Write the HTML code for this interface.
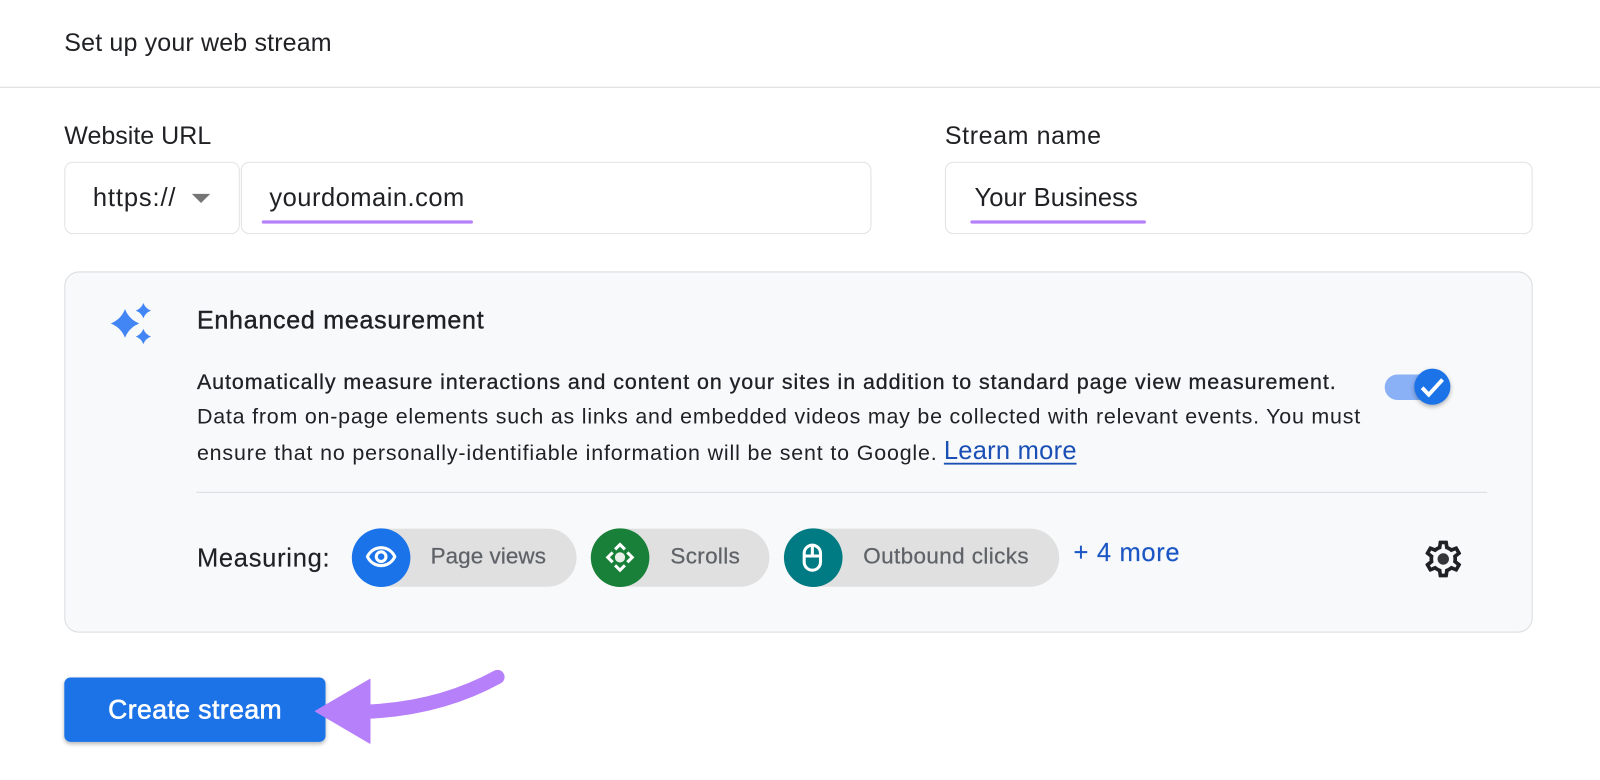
<!DOCTYPE html>
<html lang="en">
<head>
<meta charset="utf-8">
<title>Set up your web stream</title>
<style>
html,body{margin:0;padding:0;background:#fff;width:1600px;height:780px;overflow:hidden}
svg{display:block}
text{font-family:"Liberation Sans",Arial,sans-serif;white-space:pre}
</style>
</head>
<body>
<svg xmlns="http://www.w3.org/2000/svg" width="1600" height="780" viewBox="0 0 1568 764.4">
<defs>
<filter id="s1" x="-20%" y="-20%" width="140%" height="150%"><feDropShadow dx="0" dy="2" stdDeviation="2" flood-color="#000" flood-opacity=".3"/></filter>
</defs>
<rect width="1568" height="765" fill="#fff"/>
<text x="63" y="50" font-size="24.500" fill="#202124" textLength="262" lengthAdjust="spacing">Set up your web stream</text>
<rect x="0" y="85" width="1568" height="1" fill="#dadce0"/>

<text x="63" y="141" font-size="24.500" fill="#202124" textLength="144" lengthAdjust="spacing">Website URL</text>
<text x="926" y="141" font-size="24.500" fill="#202124" textLength="153" lengthAdjust="spacing">Stream name</text>

<rect x="63.5" y="159" width="171" height="70" rx="8" fill="#fff" stroke="#e0e2e5"/>
<rect x="236.5" y="159" width="617" height="70" rx="8" fill="#fff" stroke="#e0e2e5"/>
<rect x="926.5" y="159" width="575" height="70" rx="8" fill="#fff" stroke="#e0e2e5"/>
<text x="91" y="202" font-size="25" fill="#202124" textLength="81" lengthAdjust="spacing">https://</text>
<path d="M188 190h18l-9 9z" fill="#757575"/>
<text x="264" y="202" font-size="25" fill="#202124" textLength="191" lengthAdjust="spacing">yourdomain.com</text>
<text x="955" y="202" font-size="25" fill="#202124" textLength="160" lengthAdjust="spacing">Your Business</text>
<rect x="256.5" y="216" width="207" height="3.2" rx="1.6" fill="#b780fb"/>
<rect x="951" y="216" width="172" height="3.2" rx="1.6" fill="#b780fb"/>

<rect x="63.5" y="266.5" width="1438" height="353" rx="14" fill="#f8f9fa" stroke="#dadce0"/>

<path d="M122.5 303Q126.4 313 136.4 317Q126.4 321 122.5 331Q118.600 321 108.600 317Q118.600 313 122.5 303z" fill="#4285f4"/>
<path d="M140.500 296.900Q142.500 302.400 148 304.400Q142.500 306.400 140.500 311.900Q138.500 306.400 133 304.400Q138.500 302.400 140.500 296.900z" fill="#4285f4"/>
<path d="M140.500 322.300Q142.500 327.800 148 329.800Q142.500 331.800 140.500 337.300Q138.500 331.800 133 329.800Q138.500 327.800 140.500 322.300z" fill="#4285f4"/>

<text x="193" y="322" font-size="24.500" fill="#202124" stroke="#202124" stroke-width=".4" textLength="281" lengthAdjust="spacing">Enhanced measurement</text>
<text x="193" y="381" font-size="21" fill="#202124" stroke="#202124" stroke-width=".3" textLength="1116" lengthAdjust="spacing">Automatically measure interactions and content on your sites in addition to standard page view measurement.</text>
<text x="193" y="415" font-size="21" fill="#202124" textLength="1140" lengthAdjust="spacing">Data from on-page elements such as links and embedded videos may be collected with relevant events. You must</text>
<text x="193" y="451" font-size="21" fill="#202124" textLength="725" lengthAdjust="spacing">ensure that no personally-identifiable information will be sent to Google.</text>
<text x="925" y="450" font-size="25" fill="#1a4fb5" textLength="130" lengthAdjust="spacing">Learn more</text>
<rect x="925" y="453.500" width="130" height="1.800" fill="#1a4fb5"/>

<rect x="1357" y="367" width="48" height="25" rx="12.500" fill="#8ab0f5"/>
<circle cx="1403.700" cy="379" r="17.700" fill="#1a73e8" filter="url(#s1)"/>
<path d="M1393.700 380l6.500 6.800 13.500-14.800" fill="none" stroke="#fff" stroke-width="3.800"/>

<rect x="192.500" y="482" width="1265" height="1" fill="#dadce0"/>

<text x="193" y="555" font-size="25" fill="#202124" stroke="#202124" stroke-width=".15" textLength="130" lengthAdjust="spacing">Measuring:</text>

<rect x="345" y="518" width="220" height="57" rx="28.500" fill="#e0e0e0"/>
<circle cx="373.500" cy="546.500" r="28.700" fill="#1a73e8"/>
<path transform="translate(357.300 530) scale(1.350)" fill="#fff" stroke="#fff" stroke-width=".3" d="M12 6c3.790 0 7.170 2.130 8.820 5.500C19.170 14.870 15.790 17 12 17s-7.170-2.130-8.820-5.500C4.830 8.130 8.210 6 12 6m0-2C7 4 2.730 7.110 1 11.500 2.730 15.890 7 19 12 19s9.270-3.110 11-7.500C21.270 7.110 17 4 12 4zm0 5c1.380 0 2.500 1.120 2.500 2.500S13.380 14 12 14s-2.500-1.120-2.500-2.500S10.620 9 12 9m0-2c-2.480 0-4.500 2.020-4.500 4.500S9.520 16 12 16s4.500-2.020 4.500-4.500S14.480 7 12 7z"/>
<text x="422" y="552" font-size="22" fill="#5f6368" stroke="#5f6368" stroke-width=".25" textLength="113" lengthAdjust="spacing">Page views</text>

<rect x="579" y="518" width="175" height="57" rx="28.500" fill="#e0e0e0"/>
<circle cx="607.700" cy="546.500" r="28.700" fill="#188038"/>
<g fill="none" stroke="#fff" stroke-width="3">
<path d="M602.800 538.400l4.800-4.800 4.800 4.800"/>
<path d="M602.800 554l4.800 4.800 4.800-4.800"/>
<path d="M600.400 541.400l-4.800 4.800 4.800 4.800"/>
<path d="M614.800 541.400l4.800 4.800-4.800 4.800"/>
</g>
<circle cx="607.600" cy="546.200" r="5" fill="#e8f0e8"/>
<text x="657" y="552" font-size="22" fill="#5f6368" stroke="#5f6368" stroke-width=".25" textLength="68" lengthAdjust="spacing">Scrolls</text>

<rect x="768" y="518" width="270" height="57" rx="28.500" fill="#e0e0e0"/>
<circle cx="797" cy="546.500" r="28.700" fill="#007b83"/>
<rect x="788.100" y="534.300" width="16" height="24.500" rx="8" fill="none" stroke="#fff" stroke-width="3"/>
<path d="M796.100 534.300v10.600M788.100 544.900h16" fill="none" stroke="#fff" stroke-width="3"/>
<text x="846" y="552" font-size="22" fill="#5f6368" stroke="#5f6368" stroke-width=".25" textLength="162" lengthAdjust="spacing">Outbound clicks</text>

<text x="1052" y="550" font-size="25" fill="#1a56c4" stroke="#1a56c4" stroke-width=".15" textLength="104" lengthAdjust="spacing">+ 4 more</text>

<path transform="translate(1392.800 526.200) scale(1.800)" fill="#202124" d="M19.430 12.980c.04-.32.07-.64.07-.98 0-.34-.03-.66-.07-.98l2.110-1.650c.19-.15.24-.42.12-.64l-2-3.460c-.09-.16-.26-.25-.44-.25-.06 0-.12.01-.17.03l-2.490 1c-.52-.4-1.080-.73-1.690-.98l-.38-2.650C14.460 2.180 14.250 2 14 2h-4c-.25 0-.46.18-.49.42l-.38 2.650c-.61.25-1.170.59-1.690.98l-2.490-1c-.06-.02-.12-.03-.18-.03-.17 0-.34.09-.43.25l-2 3.460c-.13.22-.07.49.12.64l2.110 1.650c-.04.32-.07.65-.07.98 0 .33.03.66.07.98l-2.110 1.650c-.19.15-.24.42-.12.64l2 3.460c.09.16.26.25.44.25.06 0 .12-.01.17-.03l2.490-1c.52.4 1.080.73 1.690.98l.38 2.650c.03.24.24.42.49.42h4c.25 0 .46-.18.49-.42l.38-2.650c.61-.25 1.170-.59 1.690-.98l2.490 1c.06.02.12.03.18.03.17 0 .34-.09.43-.25l2-3.460c.12-.22.07-.49-.12-.64l-2.110-1.650zm-1.980-1.710c.04.31.05.52.05.73 0 .21-.02.43-.05.73l-.14 1.130.89.7 1.080.84-.7 1.210-1.270-.51-1.040-.42-.9.68c-.43.32-.84.56-1.250.73l-1.060.43-.16 1.130-.2 1.350h-1.400l-.19-1.350-.16-1.130-1.060-.43c-.43-.18-.83-.41-1.230-.71l-.91-.7-1.060.43-1.270.51-.7-1.210 1.080-.84.89-.7-.14-1.130c-.03-.31-.05-.54-.05-.74s.02-.43.05-.73l.14-1.130-.89-.7-1.080-.84.7-1.210 1.270.51 1.040.42.9-.68c.43-.32.84-.56 1.250-.73l1.060-.43.16-1.130.2-1.350h1.390l.19 1.350.16 1.130 1.060.43c.43.18.83.41 1.230.71l.91.7 1.060-.43 1.270-.51.7 1.210-1.070.85-.89.7.14 1.130z"/>
<circle cx="1414.400" cy="547.800" r="5.600" fill="#35363a"/>

<rect x="63" y="664" width="256" height="63" rx="6" fill="#1a73e8" filter="url(#s1)"/>
<text x="106" y="704" font-size="26" fill="#fff" stroke="#fff" stroke-width=".6" textLength="170" lengthAdjust="spacing">Create stream</text>

<path d="M358 697.500Q430 695 487.500 663.500" fill="none" stroke="#b780fb" stroke-width="14" stroke-linecap="round"/>
<path d="M309 697L362.600 665.700V728.400z" fill="#b780fb" stroke="#b780fb" stroke-width="1" stroke-linejoin="round"/>
</svg>
</body>
</html>
